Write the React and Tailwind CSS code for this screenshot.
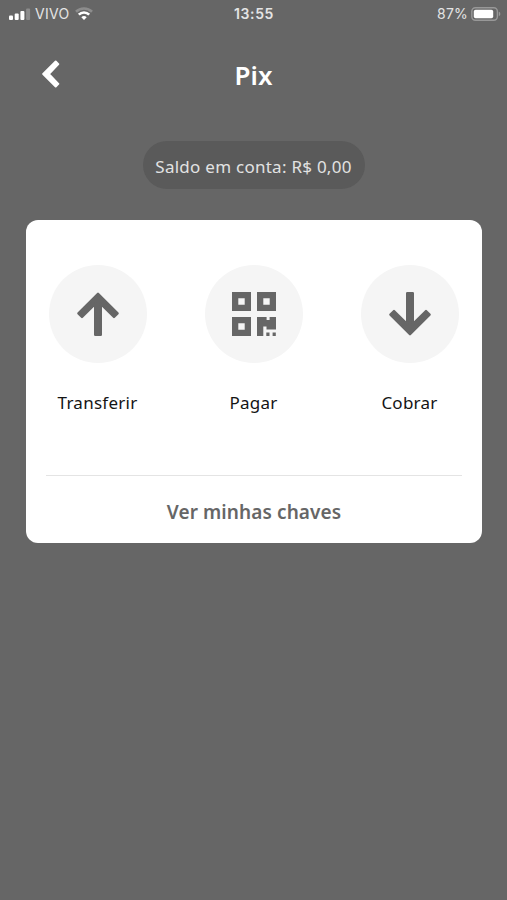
import { clsx } from "clsx";

const ARROW =
  "M22 1.8 41.6 21.4 38 25 24.8 11.8V42.7H19.2V11.8L6 25 2.4 21.4Z";

function ArrowIcon({ down }) {
  return (
    <svg
      viewBox="0 0 44 44"
      className={clsx("w-11 h-11 text-[#666]", down && "rotate-180")}
      fill="currentColor"
      stroke="currentColor"
      strokeWidth="2.4"
      strokeLinejoin="round"
    >
      <path d={ARROW} />
    </svg>
  );
}

function QrIcon() {
  return (
    <svg viewBox="0 0 44 44" className="w-11 h-11 text-[#666]" fill="currentColor">
      <path
        fillRule="evenodd"
        d="M0 0h19v19H0zM6.3 6.3v6.4h6.4V6.3zM25 0h19v19H25zM31.3 6.3v6.4h6.4V6.3zM0 25h19v19H0zM6.3 31.3v6.4h6.4v-6.4z"
      />
      <path d="M25 25h9.6v3.1h3V25H44v12.6h-9.5v-3.2h-3.2V44H25z" />
      <path d="M34.3 40.6h3.2V44h-3.2zM40.6 40.6h3.2V44h-3.2z" />
    </svg>
  );
}

const actions = [
  { label: "Transferir", icon: <ArrowIcon /> },
  { label: "Pagar", icon: <QrIcon /> },
  { label: "Cobrar", icon: <ArrowIcon down /> },
];

function StatusBar() {
  return (
    <div className="grid grid-cols-3 items-center h-7 pb-px pl-[9px] pr-[6px] font-['Inter',sans-serif] text-[14px] text-[#e4e4e4]">
      <div className="flex items-center">
        <svg viewBox="0 0 22 12" className="w-[22px] h-3" fill="#fff">
          <rect x="0" y="7.5" width="4" height="4.5" rx="1" />
          <rect x="5.7" y="5.5" width="4" height="6.5" rx="1" />
          <rect x="11.4" y="3" width="4" height="9" rx="1" />
          <rect x="17.1" y="0.5" width="4" height="11.5" rx="1" opacity=".25" />
        </svg>
        <span className="ml-1 tracking-[0.3px]">VIVO</span>
        <svg viewBox="0 0 18 13" className="ml-[5px] w-[18px] h-[13px]" fill="none" stroke="#fff" strokeWidth="2.6">
          <path d="M1 4.8a11.4 11.4 0 0 1 16 0" opacity=".25" />
          <path d="M3.8 7.7a7.4 7.4 0 0 1 10.4 0" />
          <path d="M9 13 6.3 10.3a3.9 3.9 0 0 1 5.4 0z" fill="#fff" stroke="none" />
        </svg>
      </div>
      <div className="pr-0.5 text-center font-semibold tracking-[0.6px]">13:55</div>
      <div className="flex items-center justify-end">
        <span className="tracking-[0.2px]">87%</span>
        <svg viewBox="0 0 30 14" className="ml-[3px] w-[30px] h-[14px]" fill="none">
          <rect x="0.8" y="0.8" width="25.6" height="12.4" rx="3.6" stroke="#989898" strokeWidth="1.4" />
          <rect x="2.8" y="2.8" width="19.4" height="8.4" rx="1.8" fill="#fff" />
          <path d="M27.8 4.8c2 .6 2 3.8 0 4.4z" fill="#989898" />
        </svg>
      </div>
    </div>
  );
}

export default function App() {
  return (
    <div className="w-full h-[900px] bg-[#666] font-['Noto_Sans',sans-serif]">
      <StatusBar />

      {/* Header */}
      <header className="grid grid-cols-[60px_1fr_60px] items-center h-24 px-[34px]">
        <button className="pl-2 pb-1">
          <svg
            viewBox="0 0 18 28"
            className="w-[18px] h-7"
            fill="#fff"
            stroke="#fff"
            strokeWidth="2"
            strokeLinejoin="round"
          >
            <path d="M13.7 1.5 1.2 14l12.5 12.5 2.6-2.6L6.8 14l9.5-9.9z" />
          </svg>
        </button>
        <h1 className="pb-0.5 text-center text-[26px] leading-8 font-semibold text-white">Pix</h1>
      </header>

      {/* Balance */}
      <div className="flex justify-center mt-[17px]">
        <div className="flex items-center justify-center w-[222px] h-12 pt-[3px] rounded-full bg-[#5a5a5a] text-[17px] tracking-[0.26px] text-[#e2e2e2]">
          Saldo em conta: R$ 0,00
        </div>
      </div>

      {/* Actions card */}
      <main className="mt-[31px] ml-[26px] w-[456px] h-[323px] rounded-xl bg-white">
        <div className="flex justify-between h-[255px] px-[23px] pt-[45px]">
          {actions.map(({ label, icon }) => (
            <button key={label} className="flex flex-col items-center w-[98px]">
              <span className="flex items-center justify-center w-[98px] h-[98px] rounded-full bg-[#f5f5f5]">
                {icon}
              </span>
              <span className="mt-7 pr-px text-[17px] leading-6 tracking-[0.25px] text-[#141414]">
                {label}
              </span>
            </button>
          ))}
        </div>
        <div className="mx-5 border-t border-[#e4e4e4]">
          <button className="w-full h-[67px] pt-[5px] text-[19px] font-semibold tracking-[0.1px] text-[#666]">
            Ver minhas chaves
          </button>
        </div>
      </main>
    </div>
  );
}
